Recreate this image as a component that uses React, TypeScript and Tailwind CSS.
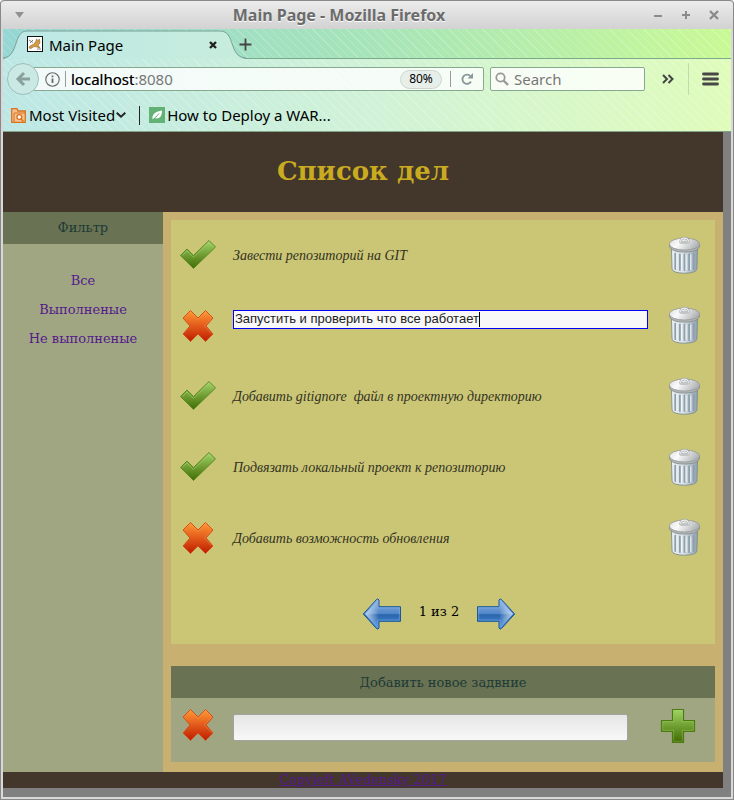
import { useState } from 'react';

const STRIPES =
  'bg-[repeating-linear-gradient(45deg,transparent_0px,transparent_5px,rgba(255,255,255,0.2)_5px,rgba(255,255,255,0.2)_6px)]';

function Check() {
  return (
    <svg width="38" height="32" viewBox="0 0 38 32" aria-hidden="true">
      <defs>
        <linearGradient id="check" x1="0" y1="0" x2="0" y2="1">
          <stop offset="0" stopColor="#a3d46a" />
          <stop offset="0.5" stopColor="#719f35" />
          <stop offset="1" stopColor="#3f6d04" />
        </linearGradient>
      </defs>
      <path d="M1.5 16.5 L8 10 L14.5 16.5 L30 1.5 L36.5 8 L14.5 29.5 Z" fill="url(#check)" stroke="#5f8b26" strokeWidth="1" strokeLinejoin="round" />
      <path d="M3.5 16.5 L8 12 L14.5 18.5 L30 3.5 L34.5 8" fill="none" stroke="#b5dc84" strokeOpacity="0.4" />
    </svg>
  );
}

function Cross() {
  return (
    <svg width="34" height="34" viewBox="0 0 34 34" aria-hidden="true">
      <defs>
        <linearGradient id="cross" x1="0" y1="0" x2="0" y2="1">
          <stop offset="0" stopColor="#ff9a36" />
          <stop offset="0.5" stopColor="#e25a1b" />
          <stop offset="1" stopColor="#bd1c00" />
        </linearGradient>
      </defs>
      <path d="M9.5 1.5 L17 9 L24.5 1.5 L32 9 L25 17 L32 25 L24.5 32.5 L17 25 L9.5 32.5 L2 25 L9 17 L2 9 Z" fill="url(#cross)" stroke="#d2511c" strokeWidth="1" strokeLinejoin="round" />
      <path d="M9.5 3.1 L17 10.6 L24.5 3.1 L30.4 9 L23.4 17 L30.4 25" fill="none" stroke="#ffa55a" strokeOpacity="0.3" />
    </svg>
  );
}

function Trash() {
  return (
    <svg width="33" height="39" viewBox="0 0 34 40" aria-hidden="true">
      <defs>
        <linearGradient id="can" x1="0" y1="0" x2="1" y2="0">
          <stop offset="0" stopColor="#e9eef1" />
          <stop offset="0.45" stopColor="#dbe3e8" />
          <stop offset="1" stopColor="#8fa0ac" />
        </linearGradient>
        <linearGradient id="lid" x1="0" y1="0" x2="1" y2="0.3">
          <stop offset="0" stopColor="#dedede" />
          <stop offset="0.4" stopColor="#fafafa" />
          <stop offset="1" stopColor="#b3b6b8" />
        </linearGradient>
      </defs>
      <path d="M3.5 12 L4.2 34 Q5 38 17 38.3 Q29 38 29.8 34 L30.5 12 Z" fill="url(#can)" stroke="#7c8d92" strokeWidth="0.9" />
      <path d="M7.5 18 V34 M12.2 19 V35 M17 19 V35 M21.8 19 V35 M26.5 18 V34" stroke="#8d9eac" strokeWidth="1.9" strokeLinecap="round" />
      <path d="M9.2 18 V34 M13.9 19 V35 M18.7 19 V35 M23.5 19 V35" stroke="#f3f7f9" strokeWidth="1" />
      <path d="M1.5 9 V11 Q4 16.5 17 16.5 Q30 16.5 32.5 11 V9 Z" fill="#b4b7b8" stroke="#7d8484" strokeWidth="0.8" />
      <ellipse cx="17" cy="8.2" rx="15.6" ry="6.2" fill="url(#lid)" stroke="#8f9494" strokeWidth="0.8" />
      <ellipse cx="17" cy="6.5" rx="5.5" ry="1.6" fill="#c2c5c5" />
      <path d="M13 6 Q13 2 17 2 Q21 2 21 6" fill="none" stroke="#a0a4a4" strokeWidth="2.4" />
      <path d="M13 6 Q13 2 17 2 Q21 2 21 6" fill="none" stroke="#eeeeee" strokeWidth="1.3" />
    </svg>
  );
}

function Plus() {
  return (
    <svg width="36" height="36" viewBox="0 0 36 36" aria-hidden="true">
      <defs>
        <linearGradient id="plus" x1="0" y1="0" x2="0" y2="1">
          <stop offset="0" stopColor="#a0d365" />
          <stop offset="0.5" stopColor="#6f9f31" />
          <stop offset="1" stopColor="#3f6b03" />
        </linearGradient>
      </defs>
      <path d="M12.5 1.5 H23.5 V12.5 H34.5 V23.5 H23.5 V34.5 H12.5 V23.5 H1.5 V12.5 H12.5 Z" fill="url(#plus)" stroke="#4d7a14" strokeWidth="1.2" strokeLinejoin="round" />
      <path d="M13.7 2.7 H22.3 V13.7 H33.3 V22.3 H22.3 V33.3 H13.7 V22.3 H2.7 V13.7 H13.7 Z" fill="none" stroke="#a8d870" strokeOpacity="0.35" />
    </svg>
  );
}

function Arrow({ left = false }: { left?: boolean }) {
  return (
    <svg width="40" height="32" viewBox="0 0 40 32" className={left ? '-scale-x-100' : ''} aria-hidden="true">
      <defs>
        <linearGradient id="arrow" x1="0" y1="0" x2="0" y2="1">
          <stop offset="0" stopColor="#8fb4e0" />
          <stop offset="0.5" stopColor="#4f86c8" />
          <stop offset="0.52" stopColor="#2a65ac" />
          <stop offset="1" stopColor="#4c8fdc" />
        </linearGradient>
        <linearGradient id="shine" x1="0" y1="0" x2="1" y2="0">
          <stop offset="0.6" stopColor="#fff" stopOpacity="0" />
          <stop offset="1" stopColor="#d5e8ff" stopOpacity="0.8" />
        </linearGradient>
      </defs>
      <path d="M1.5 8.7 H23 V2 Q24 0 25.5 1.5 L38.7 16 L25.5 30.5 Q24 32 23 30 V23.3 H1.5 Z" fill="url(#arrow)" stroke="#1b5799" strokeWidth="1" strokeLinejoin="round" />
      <path d="M2.7 9.9 H24.2 V2.6 L37 16 L24.2 29.4 V22.1 H2.7 Z" fill="url(#shine)" stroke="#8cbcf0" strokeOpacity="0.45" />
    </svg>
  );
}

const tasks = [
  { text: 'Завести репозиторий на GIT', done: true },
  { text: 'Запустить и проверить что все работает', done: false, editing: true },
  { text: 'Добавить gitignore  файл в проектную директорию', done: true },
  { text: 'Подвязать локальный проект к репозиторию', done: true },
  { text: 'Добавить возможность обновления', done: false },
];

function TitleBar() {
  return (
    <header className="flex h-[29px] items-center justify-between rounded-t border-t border-[#888] bg-linear-to-b from-[#ececec] to-[#d2d2d2] px-3.5">
      <button aria-label="Window menu" className="w-16">
        <svg width="9" height="6" viewBox="0 0 9 6"><path d="M0 0H9L4.5 6Z" fill="#919191" /></svg>
      </button>
      <span className="font-['Noto_Sans',sans-serif] text-base font-bold text-[#6b6b6b] [text-shadow:0_1px_0_#fff]">Main Page - Mozilla Firefox</span>
      <div className="flex w-[120px] items-center justify-end gap-[18px]">
        <button aria-label="Minimize"><svg width="10" height="10"><path d="M1 6H9" stroke="#8b8b8b" strokeWidth="2" /></svg></button>
        <button aria-label="Maximize"><svg width="10" height="10"><path d="M1 5H9M5 1V9" stroke="#8b8b8b" strokeWidth="2" /></svg></button>
        <button aria-label="Close"><svg width="10" height="10"><path d="M1 1L9 9M9 1L1 9" stroke="#8b8b8b" strokeWidth="2.4" /></svg></button>
      </div>
    </header>
  );
}

function BrowserBar() {
  const [url, setUrl] = useState('localhost:8080');
  const [query, setQuery] = useState('');
  return (
    <div className="bg-linear-to-r from-[#bce7e5] via-[#d0f2d7] to-[#dffcba] font-['Noto_Sans',sans-serif] text-[15px] text-black">
      <div className="border-b border-[#7aa98b] bg-linear-to-r from-[#96d6d3] via-[#a6e4b9] to-[#c9f994]">
        <div className={`flex h-[29px] items-center ${STRIPES}`}>
          <div className="relative flex h-[30px] w-[243px] shrink-0 items-center pr-[29px] pl-6">
            <svg className="absolute inset-0" width="243" height="30" viewBox="0 0 243 30" aria-hidden="true">
              <defs>
                <linearGradient id="tab" x1="0" x2="1" y1="0" y2="0">
                  <stop offset="0" stopColor="#bce7e5" />
                  <stop offset="1" stopColor="#c7eddc" />
                </linearGradient>
              </defs>
              <path d="M0 30 C16 28 10 2 24 2 H217 C233 2 225 28 243 30" fill="url(#tab)" />
              <path d="M0 29 C16 28 10 2 24 2 H217 C233 2 225 28 243 29" fill="none" stroke="#7a9e96" />
            </svg>
            <svg className="relative" width="16" height="16" viewBox="0 0 16 16" aria-hidden="true">
              <rect x="0.5" y="0.5" width="15" height="15" fill="#fff" stroke="#111" />
              <path d="M2 12 L3 10 L7 8 L9 5 L9.5 3 L11 4.5 L12.5 3 L13 7 L11 9 L13 12 L10 11 L7 10.5 L4 12.5 Z" fill="#d79b41" stroke="#8a6430" strokeWidth="0.6" />
              <path d="M2 4 L6 6.5 M3 7 L6 4 M10 13 L14 13" stroke="#666" strokeWidth="0.8" />
            </svg>
            <span className="relative ml-1.5 flex-1 pt-1">Main Page</span>
            <button aria-label="Close tab" className="relative mt-0.5"><svg width="8" height="8"><path d="M1 1L7 7M7 1L1 7" stroke="#222" strokeWidth="2.4" /></svg></button>
          </div>
          <button aria-label="New tab" className="mt-0.5 -ml-[7px]"><svg width="13" height="13"><path d="M0.5 6.5H12.5M6.5 0.5V12.5" stroke="#444" strokeWidth="1.8" /></svg></button>
        </div>
      </div>
      <div className={`border-b border-[#83a389] ${STRIPES}`}>
        <div className="flex h-10 items-center pr-3 pl-1">
          <button aria-label="Back" className="relative z-10 flex size-8 shrink-0 items-center justify-center rounded-full border border-[#9dbfba] bg-[#cbe9e4]">
            <svg width="16" height="16" viewBox="0 0 16 16"><path d="M15 8H3M9 2L3 8L9 14" fill="none" stroke="#89a09d" strokeWidth="3" /></svg>
          </button>
          <div className="-ml-1.5 flex h-6 flex-1 items-center rounded-xs border border-[#86a990] bg-white/80 pr-[10px] pl-[11px]">
            <svg width="15" height="15" viewBox="0 0 15 15" className="shrink-0" aria-hidden="true"><circle cx="7.5" cy="7.5" r="6.7" fill="none" stroke="#666" strokeWidth="1.1" /><path d="M7.5 6.5V11M7.5 3.5V5.2" stroke="#666" strokeWidth="1.8" /></svg>
            <span className="mx-[5px] h-4 w-px shrink-0 bg-[#999]" />
            <div className="relative min-w-0 flex-1">
              <input aria-label="Address" value={url} onChange={(e) => setUrl(e.target.value)} className="w-full bg-transparent text-[#777] outline-none" />
              <span className="pointer-events-none absolute left-0 text-black" aria-hidden="true">{url.split(':')[0]}</span>
            </div>
            <button className="h-[19px] w-[42px] rounded-full border border-[#ccd6cf] bg-[#e8efeb] text-xs leading-4">80%</button>
            <span className="mr-[10px] ml-2 h-4 w-px bg-[#999]" />
            <button aria-label="Reload"><svg width="12" height="12" viewBox="0 0 12 12"><path d="M9.5 3.2A4.6 4.6 0 1 0 10 8.6" fill="none" stroke="#8a999c" strokeWidth="1.9" /><path d="M12 0V5.5H6.5Z" fill="#8a999c" /></svg></button>
          </div>
          <label className="ml-1.5 flex h-6 w-[155px] items-center rounded-xs border border-[#86a990] bg-white/80 px-1">
            <svg width="14" height="14" viewBox="0 0 14 14" className="shrink-0" aria-hidden="true"><circle cx="5.5" cy="5.5" r="4.2" fill="none" stroke="#999" strokeWidth="1.8" /><path d="M8.5 8.5L13 13" stroke="#999" strokeWidth="2.4" /></svg>
            <input aria-label="Search" value={query} onChange={(e) => setQuery(e.target.value)} placeholder="Search" className="ml-[5px] w-full min-w-0 bg-transparent outline-none placeholder:text-[#777]" />
          </label>
          <button aria-label="More tools" className="ml-[17px]"><svg width="12" height="10" viewBox="0 0 12 10"><path d="M1 1L5 5L1 9M6.5 1L10.5 5L6.5 9" fill="none" stroke="#444" strokeWidth="2" /></svg></button>
          <span className="mr-[13px] ml-[14px] h-8 w-px bg-[#bfdcaa]" />
          <button aria-label="Open menu"><svg width="17" height="14" viewBox="0 0 17 14"><path d="M1.5 2H15.5M1.5 7H15.5M1.5 12H15.5" stroke="#474747" strokeWidth="2.8" strokeLinecap="round" /></svg></button>
        </div>
        <div className="flex h-8 items-center pl-2">
          <button className="flex items-center">
            <svg width="15" height="15" viewBox="0 0 15 15" aria-hidden="true"><path d="M0.7 14V0.7H6L7 3H14.3V14.3H0.7Z" fill="#f6c08e" stroke="#d9721f" strokeWidth="1.3" /><path d="M3 14V5H14" fill="none" stroke="#d9721f" /><circle cx="8.3" cy="9" r="2.4" fill="#fff" stroke="#d9721f" strokeWidth="1.3" /><path d="M10 11L12.5 13.5" stroke="#d9721f" strokeWidth="1.4" /></svg>
            <span className="ml-[3px]">Most Visited</span>
            <svg className="ml-px" width="10" height="6" viewBox="0 0 10 6" aria-hidden="true"><path d="M0.7 0.7L5 4.7L9.3 0.7" fill="none" stroke="#222" strokeWidth="1.9" /></svg>
          </button>
          <span className="mr-[9px] ml-[13px] h-[19px] w-px bg-[#222]" />
          <a href="#war" className="flex items-center">
            <svg width="16" height="16" viewBox="0 0 16 16" aria-hidden="true"><rect width="16" height="16" fill="#61b274" /><path d="M3.5 12.5C2.5 7 7 4.5 13 3.5C13 10 10 12.5 5.5 11Z" fill="#fff" /><path d="M3 13.5C6 11 8 9 10 6.5" fill="none" stroke="#61b274" /></svg>
            <span className="ml-0.5">How to Deploy a WAR...</span>
          </a>
        </div>
      </div>
    </div>
  );
}

function Sidebar() {
  return (
    <aside className="w-40 shrink-0 bg-[#a0a682] text-center">
      <h2 className="h-8 bg-[#697252] leading-8 text-[#1e3a36]">Фильтр</h2>
      <nav className="mt-[22px] flex flex-col text-[#551a8b]">
        <a href="#all" className="leading-[29px]">Все</a>
        <a href="#done" className="leading-[29px]">Выполненые</a>
        <a href="#open" className="leading-[29px]">Не выполненые</a>
      </nav>
    </aside>
  );
}

function TaskRow({ text, done, editing }: { text: string; done: boolean; editing?: boolean }) {
  const [value, setValue] = useState(text);
  return (
    <li className="flex items-center">
      <button aria-label={done ? 'Выполнено' : 'Не выполнено'} className="flex w-[54px] justify-center">{done ? <Check /> : <Cross />}</button>
      {editing ? (
        <div className="mt-[19px] mr-1.5 ml-2 flex h-[19px] flex-1 self-start border border-[#0000fe] bg-[#f8f8f8] pl-px font-['Liberation_Sans',sans-serif] text-[13px] text-[#222]">
          <input aria-label="Задача" value={value} onChange={(e) => setValue(e.target.value)} className="field-sizing-content h-[17px] bg-transparent outline-none" />
          <span className="my-px w-px bg-black" />
        </div>
      ) : (
        <span className="ml-2 flex-1 pt-0.5 font-['Liberation_Serif',serif] text-sm whitespace-pre text-[#333322] italic">{text}</span>
      )}
      <button aria-label="Удалить" className="flex w-[61px] justify-center"><Trash /></button>
    </li>
  );
}

export default function App() {
  const [draft, setDraft] = useState('');
  return (
    <div className="flex min-h-screen flex-col rounded-t border-x border-b border-[#888] bg-[#d8d8d8]">
      <TitleBar />
      <div className="mx-0.5 mb-0.5 flex flex-1 flex-col">
        <BrowserBar />
        <div className="flex-1 bg-[#808080] pr-2 pb-[9px] font-['DejaVu_Serif',serif] text-[13px]">
          <h1 className="h-20 bg-[#43362b] text-center text-[26px] leading-[78px] font-bold text-[#c9ab20]">Список дел</h1>
          <div className="flex bg-[#c7b070]">
            <Sidebar />
            <main className="flex-1 px-2 pt-2 pb-[10px]">
              <section className="bg-[#cbc676]">
                <ul className="grid h-[353px] auto-rows-fr">
                  {tasks.map((t) => <TaskRow key={t.text} {...t} />)}
                </ul>
                <div className="flex h-[71px] justify-center gap-[17px] pt-[25px] pr-2">
                  <button aria-label="Назад" className="h-8"><Arrow left /></button>
                  <span className="pt-1 text-black">1 из 2</span>
                  <button aria-label="Вперёд" className="h-8"><Arrow /></button>
                </div>
              </section>
              <form className="mt-[22px] bg-[#a0a682]" onSubmit={(e) => e.preventDefault()}>
                <h2 className="h-8 bg-[#697252] text-center leading-[33px] text-[#1e3a36]">Добавить новое задвние</h2>
                <div className="flex h-16 items-start pt-[10px]">
                  <button type="button" aria-label="Не выполнено" className="flex w-[54px] justify-center"><Cross /></button>
                  <input aria-label="Новое задание" value={draft} onChange={(e) => setDraft(e.target.value)} className="mt-1.5 ml-2 h-[27px] min-w-0 flex-1 rounded-xs border border-[#a3a3a3] bg-linear-to-b from-[#e6e6e6] to-[#f8f8f8] px-1 outline-none" />
                  <button aria-label="Добавить" className="mr-1 ml-4 flex w-[67px] justify-center"><Plus /></button>
                </div>
              </form>
            </main>
          </div>
          <footer className="h-4 overflow-hidden bg-[#43362b] text-center leading-4">
            <a href="#author" className="text-[#551a8b] underline">Copyleft AVedensky 2017</a>
          </footer>
        </div>
      </div>
    </div>
  );
}
